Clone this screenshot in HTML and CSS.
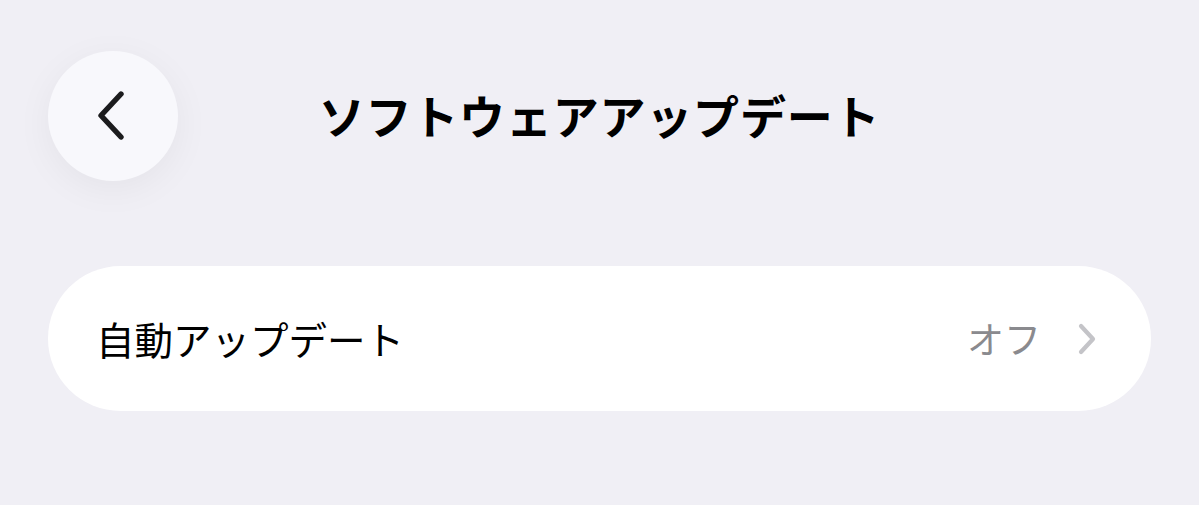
FILE: index.html
```html
<!DOCTYPE html>
<html lang="ja">
<head>
    <meta charset="UTF-8">
    <meta name="viewport" content="width=device-width, initial-scale=1.0">
    <title>ソフトウェアアップデート</title>
    <link rel="stylesheet" href="styles.css">
</head>
<body>

<div class="page">
    <!-- Header -->
    <div class="header">
        <button class="back-btn" aria-label="戻る">
            <svg width="30" height="50" viewBox="0 0 30 50">
                <path d="M25 3 L5 24.5 L25 46" fill="none" stroke="#1c1c1e" stroke-width="5.4" stroke-linecap="round" stroke-linejoin="round"/>
            </svg>
        </button>
        <h1 class="title">ソフトウェアアップデート</h1>
        <div class="spacer"></div>
    </div>

    <!-- Settings list -->
    <div class="list">
        <div class="row">
            <span class="row-label">自動アップデート</span>
            <span class="row-value">オフ</span>
            <svg class="row-chevron" width="20" height="32" viewBox="0 0 20 32">
                <path d="M4 3 L16 16 L4 29" fill="none" stroke="#c4c4c8" stroke-width="4.2" stroke-linecap="round" stroke-linejoin="round"/>
            </svg>
        </div>
    </div>
</div>

</body>
</html>
```

FILE: styles.css
```css
/* Basic styling */
body {
    font-family: "Noto Sans CJK JP", "Noto Sans", sans-serif;
    background-color: #f0eff5;
    margin: 0;
    padding: 0;
    color: #000;
}
.page {
    padding: 51px 48px 0;
}
.header {
    display: flex;
    align-items: center;
}
.back-btn {
    width: 130px;
    height: 130px;
    flex-shrink: 0;
    border: none;
    border-radius: 50%;
    background-color: #f8f8fc;
    box-shadow: 0 8px 36px rgba(0, 0, 0, 0.05);
    display: flex;
    align-items: center;
    justify-content: center;
    padding: 0 4px 0 0;
    cursor: pointer;
}
.spacer {
    width: 130px;
    flex-shrink: 0;
}
.title {
    flex: 1;
    margin: 0 0 4px;
    text-align: center;
    font-size: 46px;
    font-weight: 700;
    line-height: 1;
    letter-spacing: 0.8px;
}
/* Settings card */
.list {
    margin-top: 85px;
}
.row {
    height: 145px;
    border-radius: 73px;
    background-color: #fff;
    display: flex;
    align-items: center;
    padding: 0 54px 0 48px;
}
.row-label {
    flex: 1;
    font-size: 38.5px;
    line-height: 1;
}
.row-value {
    font-size: 37px;
    line-height: 1;
    color: #8a8a8e;
    margin-right: 36px;
}
.row-chevron {
    flex-shrink: 0;
}
```
